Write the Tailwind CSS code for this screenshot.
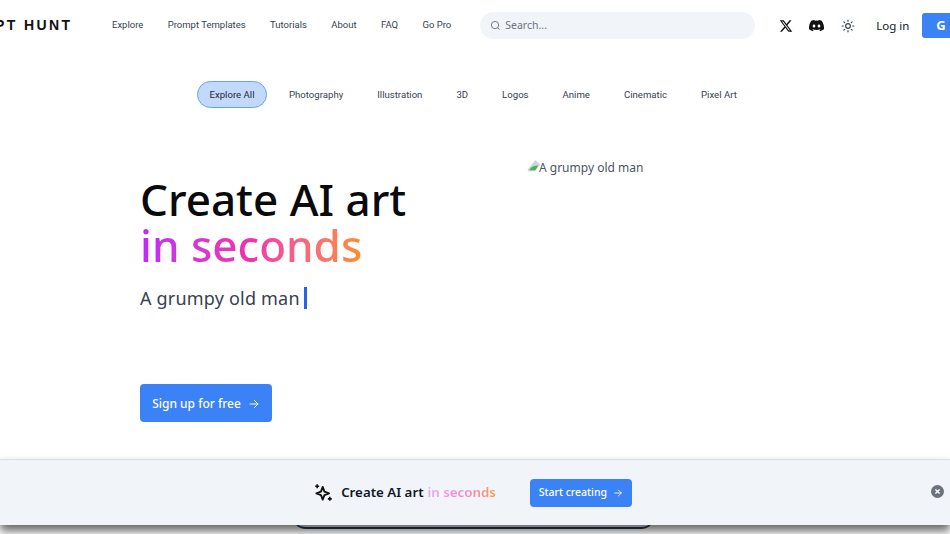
<!DOCTYPE html>
<html lang="en">
<head>
  <meta charset="UTF-8" />
  <meta name="viewport" content="width=device-width, initial-scale=1.0"/>
  <title>Prompt Hunt</title>
  <script src="https://cdn.jsdelivr.net/npm/@tailwindcss/browser@4"></script>
</head>

<body class="relative h-[534px] w-[950px] overflow-hidden bg-white font-['Noto_Sans',sans-serif] text-[#111827]">
  <!-- nav -->
  <header class="flex h-[50px] w-[1010px] items-center whitespace-nowrap pt-[1px]">
    <div class="ml-[-5px] w-[117px] shrink-0 font-['Liberation_Sans',sans-serif] text-[14px] font-bold tracking-[2.400px] text-[#111]">PT HUNT</div>
    <nav class="flex shrink-0 gap-[24.400px] font-['Roboto',sans-serif] text-[9.500px] text-[#374151]">
      <a>Explore</a>
      <a>Prompt Templates</a>
      <a>Tutorials</a>
      <a>About</a>
      <a>FAQ</a>
      <a>Go Pro</a>
    </nav>
    <div class="ml-[29px] flex h-[27px] w-[275px] shrink-0 items-center gap-[4px] rounded-full bg-[#f1f5f9] pl-[10px] text-[10.500px] text-[#6b7280]">
      <svg class="h-[11px] w-[11px]" viewBox="0 0 24 24" fill="none" stroke="#6b7280" stroke-width="2"><circle cx="11" cy="11" r="8"/><path d="m21 21-4.300-4.300"/></svg>
      Search...
    </div>
    <svg class="ml-[24px] h-[14px] w-[14px] shrink-0" viewBox="0 0 24 24" fill="#111"><path d="M18.200 2.300h3.300l-7.200 8.200 8.500 11.200h-6.700l-5.200-6.800-6 6.800H1.700l7.700-8.800L1.300 2.300h6.800l4.700 6.200zm-1.200 17.500h1.800L7 4.100H5z"/></svg>
    <svg class="ml-[16px] h-[15px] w-[15px] shrink-0" viewBox="0 0 24 24" fill="#111"><path d="M20.300 4.400A19.800 19.800 0 0 0 15.400 3l-.6 1.300a18.300 18.300 0 0 0-5.500 0L8.600 3a19.700 19.700 0 0 0-4.900 1.500C.5 9-.3 13.600.1 18a19.900 19.900 0 0 0 6 3l1.300-2a12.900 12.900 0 0 1-2-1l.5-.4a14.200 14.200 0 0 0 12.200 0l.5.400a12.900 12.900 0 0 1-2 1l1.300 2a19.900 19.900 0 0 0 6-3c.5-5.100-.8-9.600-3.600-13.600zM8 15.300c-1.200 0-2.200-1.100-2.200-2.400s1-2.400 2.200-2.400 2.200 1.100 2.200 2.400-1 2.400-2.200 2.400zm8 0c-1.200 0-2.200-1.100-2.200-2.400s1-2.400 2.200-2.400 2.200 1.100 2.200 2.400-1 2.400-2.200 2.400z"/></svg>
    <svg class="ml-[17px] h-[14px] w-[14px] shrink-0" viewBox="0 0 24 24" fill="none" stroke="#374151" stroke-width="2" stroke-linecap="round"><circle cx="12" cy="12" r="4"/><path d="M12 2v2M12 20v2M4.900 4.900l1.400 1.400M17.700 17.700l1.400 1.400M2 12h2M20 12h2M6.300 17.700l-1.400 1.400M19.100 4.900l-1.400 1.400"/></svg>
    <span class="ml-[21px] w-[46px] shrink-0 text-[11.500px] text-[#111827]">Log in</span>
    <div class="flex h-[25px] w-[60px] shrink-0 items-center rounded-[3px] bg-[#3b82f6] pl-[14px] text-[13px] font-bold text-white">G</div>
  </header>

  <!-- categories -->
  <div class="mt-[31px] ml-[197px] flex items-center font-['Roboto',sans-serif] text-[9.600px] text-[#374151] whitespace-nowrap">
    <span class="flex h-[27px] w-[70px] items-center justify-center rounded-full border border-[#60a5fa] bg-[#c3d9fb] pt-[1px] text-[#1f2937]">Explore All</span>
    <div class="ml-[22px] mt-[1px] flex gap-[34px]">
      <span>Photography</span>
      <span>Illustration</span>
      <span>3D</span>
      <span>Logos</span>
      <span>Anime</span>
      <span>Cinematic</span>
      <span>Pixel Art</span>
    </div>
  </div>

  <!-- hero -->
  <main class="ml-[140px] mt-[68px] flex">
    <div class="w-[387px]">
      <h1 class="text-[44px] leading-[46px] font-medium text-[#0a0a0a]">Create AI art<br/><span class="bg-gradient-to-r from-[#c026ff] via-[#f032a8] to-[#ff8c26] bg-clip-text text-transparent">in seconds</span></h1>
      <p class="mt-[18px] flex h-[24px] items-center text-[18px] tracking-[0.200px] text-[#374151]">A grumpy old man<span class="ml-[4px] h-[22px] w-[3px] bg-[#2563eb]"></span></p>
      <a class="mt-[74px] flex h-[38px] w-[132px] items-center justify-center gap-[7px] rounded-[4px] bg-[#3b82f6] pt-[1px] text-[12px] font-medium text-white">Sign up for free
        <svg class="h-[12px] w-[12px]" viewBox="0 0 24 24" fill="none" stroke="currentColor" stroke-width="2" stroke-linecap="round" stroke-linejoin="round"><path d="M4 12h16M13 5l7 7-7 7"/></svg>
      </a>
    </div>
    <div class="mt-[-18px] flex h-[20px] items-start text-[12px] text-[#4b5563]">
      <svg class="h-[15px] w-[15px] shrink-0" viewBox="0 0 16 16"><path d="M1 12 9 2l5 5-6 7H1z" fill="#cbd5e1"/><path d="M3 12c2-3 5-4 9-4l-3 5H3z" fill="#4caf50"/></svg>
      <span class="mt-[1px] -ml-[3px]">A grumpy old man</span>
    </div>
  </main>

  <!-- bottom banner -->
  <div class="absolute left-[292px] top-[500px] h-[29px] w-[363px] rounded-b-[14px] border-b-2 border-[#1e3a5f]"></div>
  <div class="absolute inset-x-0 top-[459px] flex h-[66px] items-center justify-center border-t border-[#dcdfe3] bg-[#f1f5f9] pr-[4px] shadow-[0_6px_9px_rgba(0,0,0,0.6)]">
    <svg class="h-[19px] w-[19px]" viewBox="0 0 24 24" fill="none" stroke="#111" stroke-width="2.400" stroke-linejoin="round"><path d="M11 5l2.200 5.800L19 13l-5.800 2.200L11 21l-2.200-5.800L3 13l5.800-2.200z"/><path d="M4 1.500v5M1.500 4h5M20 17.500v5M17.500 20h5" stroke-width="2"/></svg>
    <span class="ml-[8px] text-[13.300px] font-semibold text-[#111827]">Create AI art</span>
    <span class="ml-[4px] bg-gradient-to-r from-[#e9a8f5] via-[#f783c8] to-[#ff9640] bg-clip-text text-[13.300px] font-semibold text-transparent">in seconds</span>
    <a class="ml-[34px] flex h-[28px] w-[102px] items-center justify-center gap-[6px] rounded-[4px] bg-[#3b82f6] text-[10.500px] font-medium text-white">Start creating
      <svg class="h-[10px] w-[10px]" viewBox="0 0 24 24" fill="none" stroke="currentColor" stroke-width="2" stroke-linecap="round" stroke-linejoin="round"><path d="M4 12h16M13 5l7 7-7 7"/></svg>
    </a>
    <button class="absolute left-[931px] top-[25px] flex h-[13px] w-[13px] items-center justify-center rounded-full bg-[#6b7280]">
      <svg class="h-[7px] w-[7px]" viewBox="0 0 10 10" stroke="#fff" stroke-width="2"><path d="M2 2l6 6M8 2l-6 6"/></svg>
    </button>
  </div>
</body>
</html>
